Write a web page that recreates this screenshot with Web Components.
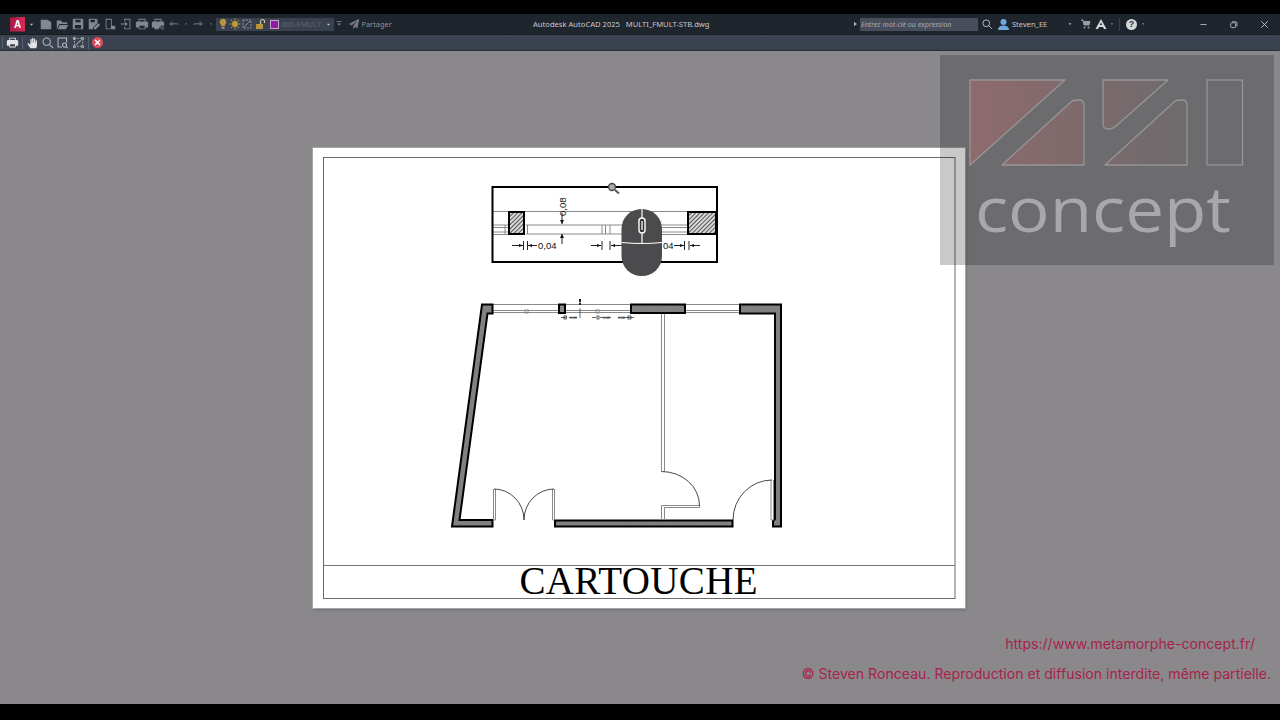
<!DOCTYPE html>
<html lang="fr"><head><meta charset="utf-8"><title>AutoCAD</title>
<style>
html,body{margin:0;padding:0;background:#000;overflow:hidden}
body{width:1280px;height:720px;font-family:"Noto Sans",sans-serif}
</style></head>
<body>
<app-shell>
  <title-bar slot="title"></title-bar>
  <cad-toolbar slot="toolbar"></cad-toolbar>
  <cad-sheet slot="sheet"></cad-sheet>
  <cad-watermark slot="overlay"></cad-watermark>
  <site-notice slot="overlay"></site-notice>
</app-shell>
<script>
const ICONS={
 caret:'<path d="M5 6.500h6L8 10z"/>',
 file:'<path d="M2 3h8l4 3v8H2z"/>',
 open:'<path d="M2 4h5l1 2h6v2H5l-3 6zM5.500 9H15l-2.500 5H3z"/>',
 save:'<path fill-rule="evenodd" d="M3 2h10l1 1v11H2V3zM5 3v3h6V3zM4.500 9v4h7V9z"/>',
 saveas:'<path fill-rule="evenodd" d="M2 2h9l1 1v4L7 12v2H2zM4 3v3h5V3z"/><path d="M8 12l5-5 2 2-5 5H8z"/>',
 sheet:'<path fill-rule="evenodd" d="M3 2h7v8h-1V3H4v10h5v1H3z"/><path d="M9 10h5v4H9z"/>',
 pub:'<path fill-rule="evenodd" d="M6 2h7v12H6v-3h1v2h5V3H7v2H6z"/><path d="M2 7.500h5V5.500l3 2.500-3 2.500V8.500H2z"/>',
 print:'<path fill-rule="evenodd" d="M4 2h8v3h2l1 1v6h-3v2H4v-2H1V6l1-1h2zM5 3v2h6V3zM5 10v3h6v-3z"/>',
 print2:'<path fill-rule="evenodd" d="M4 2h8v3h2l1 1v4h-4v2H9v2H4v-2H1V6l1-1h2zM5 3v2h6V3z"/><path d="M11 11h4v1h-4zM11 13h4v1h-4z"/>',
 undo:'<path d="M1 8l5-4v2.500h5c2 0 3 1 4 3-1.500-1-2.500-1-4-1H6V11z"/>',
 redo:'<path d="M15 8l-5-4v2.500H5c-2 0-3 1-4 3 1.500-1 2.500-1 4-1h5V11z"/>',
 list:'<path d="M4 3.500h8v1.200H4zM5 7h6L8 10.500z"/>',
 send:'<path d="M15 1L1 8l4 2 7-6-5 7v4l2.500-3 3 1.500z"/>',
 hand:'<path d="M5 14L2 9.500c-.5-1 .8-1.700 1.500-.8L5 10.200V4c0-1 1.500-1 1.500 0v3.500h.5V2.800c0-1 1.500-1 1.500 0v4.700H9V3.500c0-1 1.500-1 1.500 0v4.500h.5V5.500c0-1 1.500-1 1.500 0V11c0 1.500-1 3-2 3z"/>',
 bulb:'<path d="M8 1a4.500 4.500 0 0 1 2.500 8.200V11h-5V9.200A4.500 4.500 0 0 1 8 1z"/><path fill="#8d8f90" d="M6 12h4v2.500H6z"/>'
};
const STROKE={
 zoom:'<circle cx="7" cy="7" r="4.500"/><path d="M10.500 10.500L15 15"/>',
 zoomwin:'<path d="M13 8V2.500H2.500v11H7"/><circle cx="10.500" cy="11" r="2.500"/><path d="M12.500 13l2 2"/>',
 ext:'<path stroke-dasharray="2 1.500" d="M3 3h10v10H3z"/><circle cx="3" cy="3" r="1.400"/><circle cx="13" cy="3" r="1.400"/><circle cx="3" cy="13" r="1.400"/><circle cx="13" cy="13" r="1.400"/><path d="M5 11l6-6"/>',
 search:'<circle cx="7" cy="7" r="4.500"/><path d="M10.500 10.500L14.500 14.500"/>',
 min:'<path d="M3.500 8h9"/>',
 restore:'<rect x="4" y="5.500" width="7" height="7" rx="1"/><path d="M6 4h5.500a1.500 1.500 0 0 1 1.500 1.500V11"/>',
 close:'<path d="M3.500 3.500l9 9M12.500 3.500l-9 9"/>'
};
class ToolIcon extends HTMLElement{
  constructor(){super();this.attachShadow({mode:'open'});}
  connectedCallback(){
    const n=this.getAttribute('name'),w=this.getAttribute('w')||16,s=this.getAttribute('s')||14,c=this.getAttribute('c')||'';
    const body=ICONS[n]?`<g fill="currentColor">${ICONS[n]}</g>`:`<g fill="none" stroke="currentColor" stroke-width="1.300">${STROKE[n]||''}</g>`;
    this.shadowRoot.innerHTML=`<style>:host{display:flex;align-items:center;justify-content:center;flex:0 0 ${w}px;width:${w}px;height:16px;color:${c||'var(--ic,#83888f)'}}svg{display:block;filter:blur(.25px)}</style><svg width="${s}" height="${s}" viewBox="0 0 16 16">${body}</svg>`;
  }
}
customElements.define('tool-icon',ToolIcon);

class AppShell extends HTMLElement{
  constructor(){super();this.attachShadow({mode:'open'}).innerHTML=`<style>
  :host{display:flex;flex-direction:column;width:1280px;height:720px;background:#000}
  .bar{height:14px;flex:none;background:#000}
  .bottom{height:16px;flex:none;background:#000}
  .canvas{position:relative;flex:1;min-height:0;background:#8a888b;display:flex;justify-content:center;padding:97px 2px 0 0;box-sizing:border-box;overflow:hidden}
  </style><div class="bar"></div><slot name="title"></slot><slot name="toolbar"></slot>
  <div class="canvas"><slot name="sheet"></slot><slot name="overlay"></slot></div><div class="bottom"></div>`;}
}
customElements.define('app-shell',AppShell);

class TitleBar extends HTMLElement{
  constructor(){super();this.attachShadow({mode:'open'}).innerHTML=`<style>
  :host{display:flex;align-items:center;flex:none;height:21px;background:#1f252d;color:#c9ccd1;font:7.600px "Noto Sans",sans-serif;box-sizing:border-box;border-bottom:1px solid #181c22}
  .left{flex:0 0 533px;display:flex;align-items:center;box-sizing:border-box;padding-left:10px}
  .logo{flex:none;width:15px;height:15px;background:linear-gradient(90deg,#a81c44,#d62a58);color:#fff;font:700 10px "Liberation Sans",sans-serif;display:flex;align-items:center;justify-content:center;clip-path:polygon(0 8%,100% 0,100% 100%,0 100%)}
  .row{display:flex;align-items:center}
  .layer{display:flex;align-items:center;flex:none;width:118px;height:13px;background:#3a414e;margin-left:1px;box-sizing:border-box;padding-left:1px}
  .sw{flex:none;width:9px;height:9px;background:#8e1ea0;border:1px solid #c9a2d2;box-sizing:border-box;margin-left:4px}
  .ln{flex:1;color:#5f6570;font-size:7.500px;margin-left:3px;white-space:nowrap}
  .share{color:#8f949b;margin-left:-2px;font-size:7.400px}
  .center{flex:0 0 321px;white-space:pre;color:#c6c9ce;font-size:7.600px}
  .right{flex:1;display:flex;align-items:center;min-width:0}
  .search{flex:none;width:118px;height:13px;background:#474d5b;color:#a6aab2;font:italic 7.150px "Noto Sans",sans-serif;line-height:13px;padding-left:1px;box-sizing:border-box;white-space:nowrap;overflow:hidden}
  .user{flex:none;width:50px;color:#c6c9ce;font-size:7.500px;margin-left:2px}
  .sep{flex:none;width:1px;height:13px;background:#3b414b;margin:0 3px}
  .help{flex:none;width:11px;height:11px;border-radius:50%;background:#d5d6d9;color:#2a2f36;font:700 9px/11px "Liberation Sans",sans-serif;text-align:center;margin:0 0 0 3px}
  .tri{flex:none;width:0;height:0;border-left:3px solid #b8bbc0;border-top:2.500px solid transparent;border-bottom:2.500px solid transparent;margin-right:3px}
  </style>
  <div class="left"><div class="logo">A</div>
    <tool-icon name="caret" w="13" s="9" c="#b8bbc0"></tool-icon>
    <div class="row" style="margin-left:-0.500px">
    <tool-icon name="file"></tool-icon><tool-icon name="open"></tool-icon><tool-icon name="save"></tool-icon><tool-icon name="saveas"></tool-icon><tool-icon name="sheet"></tool-icon><tool-icon name="pub"></tool-icon><tool-icon name="print"></tool-icon><tool-icon name="print2"></tool-icon>
    <tool-icon name="undo" c="#5c626c" w="17" s="12"></tool-icon><tool-icon name="caret" w="6" s="6" c="#8a8f97"></tool-icon><tool-icon name="redo" c="#5c626c" w="18" s="12"></tool-icon><tool-icon name="caret" w="8" s="6" c="#8a8f97"></tool-icon>
    </div>
    <div class="layer">
      <tool-icon name="bulb" w="12" s="12" c="#b8963c"></tool-icon>
      <svg width="12" height="12" viewBox="0 0 12 12" style="flex:none"><circle cx="6" cy="6" r="3" fill="#bd9a3a"/><path d="M6 .5v2M6 9.500v2M.5 6h2M9.500 6h2M2 2l1.500 1.500M8.500 8.500L10 10M10 2L8.500 3.500M3.500 8.500L2 10" stroke="#bd9a3a"/></svg>
      <svg width="12" height="12" viewBox="0 0 12 12" style="flex:none"><path d="M2 2h8v8H2z" fill="none" stroke="#8a8f97" stroke-dasharray="2 1"/><path d="M3 9l6-6" stroke="#8a8f97"/></svg>
      <svg width="12" height="12" viewBox="0 0 12 12" style="flex:none;margin-left:1px"><path d="M2 6h7v5H2z" fill="#b8933c"/><path d="M6.500 6V3.500a2 2 0 0 1 4 0V5" fill="none" stroke="#c9c39f" stroke-width="1.200"/></svg>
      <div class="sw"></div><div class="ln">000-FMULT</div>
      <tool-icon name="caret" w="10" s="9" c="#b8bbc0"></tool-icon>
    </div>
    <tool-icon name="list" w="10" s="10" c="#8a8f97"></tool-icon>
    <tool-icon name="send" w="20" s="12" c="#767b84"></tool-icon>
    <span class="share">Partager</span>
  </div>
  <div class="center">Autodesk AutoCAD 2025   MULTI_FMULT-STB.dwg</div>
  <div class="right">
    <div class="tri"></div>
    <div class="search">Entrez mot-clé ou expression</div>
    <tool-icon name="search" w="16" s="12" c="#b9bcc1" style="margin-left:1px"></tool-icon>
    <svg width="13" height="13" viewBox="0 0 13 13" style="flex:none;margin-left:2px"><circle cx="6.500" cy="4" r="3" fill="#6ea8dc"/><path d="M1 12c0-3 2-4.500 5.500-4.500S12 9 12 12z" fill="#6ea8dc"/></svg>
    <div class="user">Steven_EE</div>
    <tool-icon name="caret" w="16" s="8" c="#b8bbc0"></tool-icon>
    <svg width="10" height="10" viewBox="0 0 10 10" style="flex:none;margin-left:3px"><path d="M0 1h2l1 5h5l1-3.500H2.500" fill="#9a9da3" stroke="#9a9da3"/><circle cx="3.500" cy="8.500" r="1" fill="#9a9da3"/><circle cx="7.500" cy="8.500" r="1" fill="#9a9da3"/></svg>
    <svg width="12" height="12" viewBox="0 0 12 12" style="flex:none;margin-left:4px"><path d="M6 1L11.500 11H9L8 9H4l-1 2H.5zM6 4.500L4.800 7h2.400z" fill="#d5d6d9" fill-rule="evenodd"/></svg>
    <tool-icon name="caret" w="9" s="6" c="#b8bbc0"></tool-icon>
    <div class="sep"></div>
    <div class="help">?</div>
    <tool-icon name="caret" w="12" s="6" c="#b8bbc0"></tool-icon>
    <div style="flex:0 0 46px"></div>
    <tool-icon name="min" w="16" s="11" c="#b5b8bd"></tool-icon>
    <div style="flex:0 0 14px"></div>
    <tool-icon name="restore" w="16" s="11" c="#b5b8bd"></tool-icon>
    <div style="flex:0 0 15px"></div>
    <tool-icon name="close" w="16" s="11" c="#c9ccd0"></tool-icon>
  </div>`;}
}
customElements.define('title-bar',TitleBar);

class CadToolbar extends HTMLElement{
  constructor(){super();this.attachShadow({mode:'open'}).innerHTML=`<style>
  :host{display:flex;align-items:center;flex:none;height:16px;background:linear-gradient(#3c4452,#3a414e);box-sizing:border-box;border-bottom:1px solid #2a3038;padding-left:2px}
  .h{flex:none;width:1px;height:12px;background:#59606c;margin-right:2px}
  .s{flex:none;width:1px;height:12px;background:#596070;margin:0 1.500px}
  .x{flex:none;width:11px;height:11px;border-radius:50%;background:#dc4a5e;color:#f4d8dc;display:flex;align-items:center;justify-content:center;margin-left:2px}
  </style><div class="h"></div>
  <tool-icon name="print" w="15" s="13" c="#e3e5e8"></tool-icon><div class="s"></div>
  <tool-icon name="hand" w="15" s="14" c="#e3e5e8" style="margin-left:1px"></tool-icon>
  <tool-icon name="zoom" w="15" s="13" c="#b4b8bf"></tool-icon>
  <tool-icon name="zoomwin" w="15" s="13" c="#b4b8bf"></tool-icon>
  <tool-icon name="ext" w="16" s="13" c="#a4a9b2"></tool-icon><div class="s"></div>
  <div class="x"><svg width="7" height="7" viewBox="0 0 7 7"><path d="M1 1l5 5M6 1L1 6" stroke="#fff" stroke-width="1.500"/></svg></div>`;}
}
customElements.define('cad-toolbar',CadToolbar);

class CadSheet extends HTMLElement{
  constructor(){super();
  const hatch=(x,y,w,h)=>`<rect x="${x}" y="${y}" width="${w}" height="${h}" fill="url(#ht)" stroke="#000" stroke-width="2"/>`;
  this.attachShadow({mode:'open'}).innerHTML=`<style>
  :host{display:block;flex:none;width:652px;height:460px;background:#fff;box-shadow:0 0 0 1px #a5a4a7,1px 2px 3px rgba(60,60,60,.35)}
  svg{display:block}
  text{font-family:"Liberation Sans",sans-serif;fill:#111}
  .t{font-family:"Liberation Serif",serif;font-size:39px;fill:#000}
  </style>
  <svg width="652" height="460" viewBox="313 148 652 460">
   <defs>
    <pattern id="ht" width="3" height="3" patternUnits="userSpaceOnUse" patternTransform="rotate(-45)"><rect width="3" height="3" fill="#d8d8d8"/><rect width="3" height="1" fill="#555"/></pattern>
    <pattern id="wl" width="2" height="2" patternUnits="userSpaceOnUse" patternTransform="rotate(-45)"><rect width="2" height="2" fill="#868686"/><rect width="2" height=".5" fill="#6f6f6f"/></pattern>
   </defs>
   <rect x="323.500" y="157.500" width="631.500" height="441" fill="none" stroke="#6a6a6a"/>
   <path d="M323.500 565.500H955" stroke="#777"/>
   <text class="t" x="519.500" y="594" textLength="238">CARTOUCHE</text>

   <!-- detail -->
   <g fill="none" stroke="#8a8a8a">
    <path d="M492 211.500H717" stroke-width="1.200"/>
    <path d="M492 225H509M492 227.500H509M492 232H509M492 234.500H509"/>
    <path d="M526 225H622M526 234H622M662 225H688M662 227.500H688M662 232H688M662 234.500H688"/>
    <path d="M505 225V234M527.500 225V234M602 225V234M605.500 225V234M610 225V234"/>
   </g>
   <rect x="492.500" y="187" width="224.500" height="75" fill="none" stroke="#000" stroke-width="2"/>
   ${hatch(509,212,15,22)}${hatch(688,212,28,22)}
   <g stroke="#222" fill="none" stroke-width="1">
    <path d="M562 213V224M562 234V244M512 245.500H523M523.500 241V250M527.500 241V250M528 245.500H537M591 245.500H601M602 241V250M610 241V250M611 245.500H622M674 245.500H684M684.500 241V250M689 241V250M690 245.500H700"/>
   </g>
   <g fill="#111"><path d="M560 220h4l-2 4zM560 238h4l-2-4zM519 244v3l4-1.500zM532 244v3l-4-1.500zM597 244v3l4-1.500zM615 244v3l-4-1.500zM680 244v3l4-1.500zM694 244v3l-4-1.500z"/></g>
   <text x="538" y="249" font-size="9.500">0,04</text>
   <text x="0" y="0" font-size="9.500" transform="translate(565.500 216) rotate(-90)" fill="#333">0,08</text>
   <text x="663" y="249" font-size="9.500">04</text>
   <path d="M659 245.500H662" stroke="#111"/>

   <!-- mouse -->
   <rect x="621.500" y="209" width="40.500" height="67" rx="20" fill="#4b4a4c"/>
   <path d="M642 209V243M622 242.500C632 243.500 652 243.500 662 242.500" stroke="#fff" stroke-width="1.200" fill="none"/>
   <rect x="639" y="218" width="6" height="15" rx="3" fill="#333" stroke="#fff" stroke-width="1.400"/>
   <path d="M642 221V230" stroke="#fff" stroke-width="1.300"/>
   <!-- zoom cursor -->
   <circle cx="612" cy="187" r="3.500" fill="#aaa" stroke="#444" stroke-width="1.300"/>
   <path d="M615 190L619 193.500" stroke="#555" stroke-width="2"/>

   <!-- plan : windows -->
   <g fill="none" stroke="#8a8a8a" stroke-width="1">
    <path d="M493 304.500H558M566 304.500H630M686 304.500H739"/>
    <path d="M493 310.500H558M566 310.500H630M686 310.500H739"/>
    <path d="M493 312.500H558M566 312.500H630M686 312.500H739"/>
    <rect x="525" y="310" width="3" height="3"/><rect x="596" y="310" width="3" height="3"/>
   </g>
   <!-- plan : walls -->
   <g fill="url(#wl)" stroke="#000" stroke-width="2">
    <path d="M482 304.500H492.500V313.500H487.500L459.500 520H492.500V526.500H452z"/>
    <path d="M555 520.500H732.500V526.500H555z"/>
    <path d="M740 304.500H781V526.500H773V521L775 519V313.500H740z"/>
    <rect x="631" y="304.500" width="54" height="8.500"/>
   </g>
   <rect x="559" y="304.500" width="6" height="8.500" fill="#8a8a8a" stroke="#000" stroke-width="2"/>
   <!-- partition -->
   <g fill="none" stroke="#8a8a8a" stroke-width="1">
    <path d="M661.500 314V471.500M664.500 314V471.500"/>
    <path d="M661.500 520V505.500H699.500V507.500H664.500V520"/>
    <path d="M493.500 489V520M495.500 489V520H493.500M552.500 489V520M554.500 489V520H552.500"/>
    <path d="M771 480V520M773.500 480V520H771"/>
   </g>
   <g fill="none" stroke="#333" stroke-width=".9">
    <path d="M661.500 471.500A38 34 0 0 1 699.500 506"/>
    <path d="M494 489A30 31 0 0 1 524 520"/>
    <path d="M554 489A30 31 0 0 0 524 520"/>
    <path d="M772 480A39 40 0 0 0 733 520"/>
   </g>
   <!-- plan : tiny dims -->
   <g stroke="#222" stroke-width=".7" fill="none">
    <path d="M580 299V304M580 308V318M561 317.500H566M569 317.500H577M592 317.500H596M600 317.500H611M618 317.500H634"/>
    <rect x="564" y="316" width="2.500" height="3"/><rect x="597" y="316" width="2" height="3"/><rect x="628" y="316" width="3" height="3"/>
   </g>
   <path d="M579 299h2v3h-2zM579 303h2v2h-2z" fill="#222"/>
   <text x="570" y="319" font-size="3.500">0,04</text>
   <text x="603" y="319" font-size="3.500">0,04</text>
   <text x="618" y="319" font-size="3.500">0,04</text>
  </svg>`;}
}
customElements.define('cad-sheet',CadSheet);

class CadWatermark extends HTMLElement{
  constructor(){super();this.attachShadow({mode:'open'}).innerHTML=`<style>
  :host{position:absolute;left:940px;top:4px;width:334px;height:210px;background:rgba(0,0,0,.21);display:block}
  svg{display:block}
  text{font-family:"Open Sans",sans-serif;font-size:62px;fill:#a9a7aa}
  </style>
  <svg width="334" height="210" viewBox="940 55 334 210">
   <defs><linearGradient id="g" gradientUnits="userSpaceOnUse" x1="970" y1="0" x2="1190" y2="0"><stop offset="0" stop-color="#8f6a6d"/><stop offset=".6" stop-color="#7a6a6c"/><stop offset="1" stop-color="#6d6b6d"/></linearGradient></defs>
   <g fill="url(#g)" stroke="#989497" stroke-width="1.300" stroke-linejoin="round">
    <path d="M970 80H1065L970 165z"/>
    <path d="M1002 165L1071 102Q1073 100 1077 100H1079Q1084 100 1084 105V165z"/>
    <path d="M1103 80H1168L1116 126Q1113 129 1109 129H1108Q1103 129 1103 124z"/>
    <path d="M1105 165L1174 102Q1176 100 1180 100H1182Q1187 100 1187 105V165z"/>
   </g>
   <rect x="1207" y="80" width="35.500" height="85" fill="none" stroke="#989497" stroke-width="1.300"/>
   <text x="975" y="232" textLength="256" lengthAdjust="spacingAndGlyphs">concept</text>
  </svg>`;}
}
customElements.define('cad-watermark',CadWatermark);

class SiteNotice extends HTMLElement{
  constructor(){super();this.attachShadow({mode:'open'}).innerHTML=`<style>
  :host{position:absolute;right:9px;bottom:22px;display:flex;flex-direction:column;align-items:flex-end;gap:13px;color:#a8234c;font:14.100px/17px "Inter","Noto Sans",sans-serif;white-space:nowrap}
  .u{margin-right:16px}
  </style><div class="u">https://www.metamorphe-concept.fr/</div><div>© Steven Ronceau. Reproduction et diffusion interdite, même partielle.</div>`;}
}
customElements.define('site-notice',SiteNotice);
</script>
</body></html>
